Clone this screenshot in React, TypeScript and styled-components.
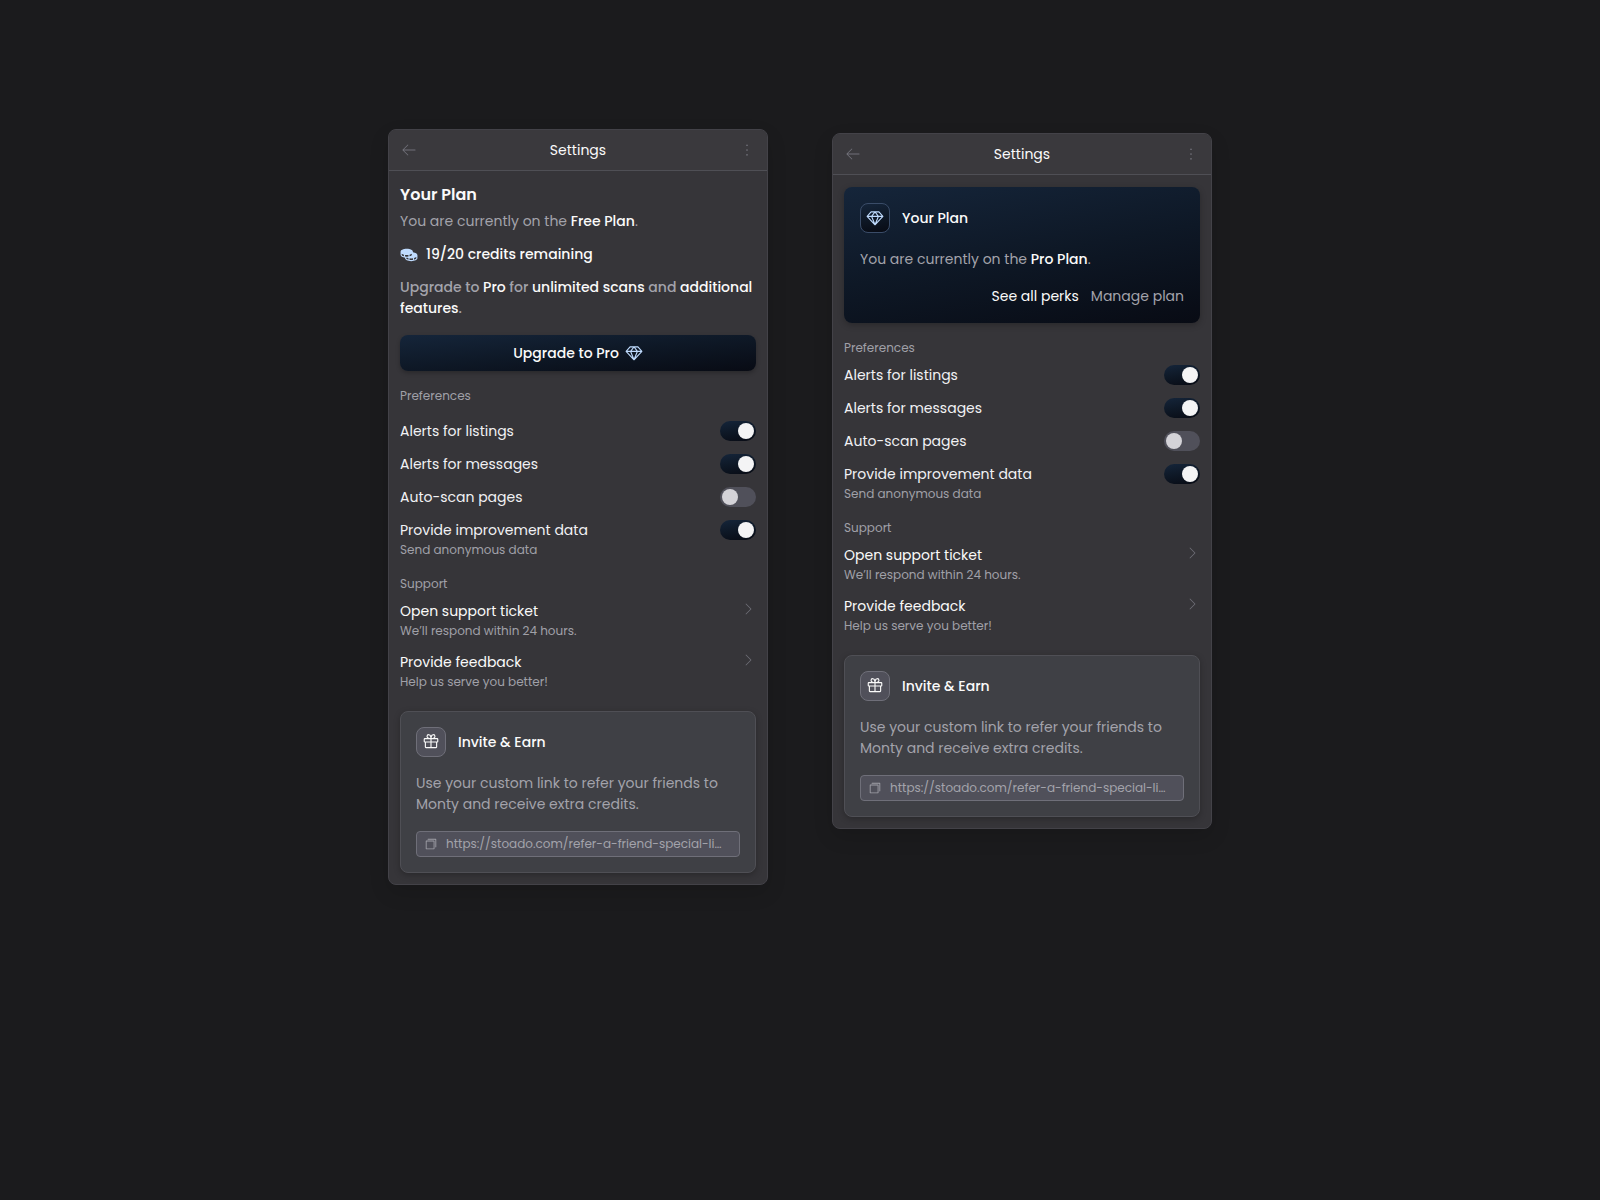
import React, { useId, useState } from "react";
import styled, { createGlobalStyle, css } from "styled-components";
import {
  PiArrowLeftLight,
  PiCaretRightLight,
  PiCoinsFill,
  PiCopySimple,
  PiDotsThreeVertical,
  PiGift,
  PiSketchLogo,
} from "react-icons/pi";

const c = {
  page: "#1b1b1d",
  panel: "#363539",
  header: "#3a393d",
  line: "#4f4f55",
  edge: "#434248",
  card: "#3f4045",
  chip: "#50505a",
  chipEdge: "#6f6f79",
  white: "#fafafa",
  text: "#f1f1f4",
  muted: "#a3a3ab",
  dim: "#a0a0a8",
  faint: "#71717a",
  ice: "#bfdbfe",
};

const navy = (angle: number) =>
  `linear-gradient(${angle}deg, #15253a 0%, #0e1826 50%, #080b14 100%)`;

const GlobalStyle = createGlobalStyle`
  *, *::before, *::after { box-sizing: border-box; }
  body {
    margin: 0;
    background: ${c.page};
    color: ${c.text};
    font-family: Poppins, Inter, "Open Sans", sans-serif;
    font-size: 14px;
    line-height: 21px;
    -webkit-font-smoothing: antialiased;
  }
  h1, h2, h3, p, ul { margin: 0; padding: 0; font: inherit; }
  ul { list-style: none; }
  button, input { font: inherit; color: inherit; }
  button { border: 0; padding: 0; background: none; cursor: pointer; }
  a { color: inherit; text-decoration: none; }
`;

const Page = styled.main`
  display: flex;
  flex-wrap: wrap;
  justify-content: center;
  align-items: flex-start;
  gap: 64px;
  min-height: 100vh;
  padding: 129px 24px;
`;

const Panel = styled.section<{ $lowered?: boolean }>`
  flex: 0 1 380px;
  min-width: 0;
  margin-top: ${(p) => (p.$lowered ? "4px" : "0")};
  border: 1px solid ${c.edge};
  border-radius: 8px;
  background: ${c.panel};
  box-shadow: 0 8px 20px rgba(0, 0, 0, 0.12);
  overflow: hidden;
`;

const Header = styled.header`
  display: flex;
  align-items: center;
  justify-content: space-between;
  height: 41px;
  padding: 0 11px;
  border-bottom: 1px solid ${c.line};
  background: ${c.header};
`;

const HeaderTitle = styled.h1`
  color: ${c.white};
`;

const IconButton = styled.button`
  display: flex;
  color: ${c.faint};
  font-size: 18px;
`;

const Body = styled.div`
  display: flex;
  flex-direction: column;
  gap: 16px;
  padding: 12px 11px 11px;
`;

const Plan = styled.section`
  display: flex;
  flex-direction: column;
  gap: 12px;
`;

const PlanHeading = styled.div`
  display: flex;
  flex-direction: column;
  gap: 4px;
`;

const PlanTitle = styled.h2`
  color: ${c.white};
  font-size: 16px;
  font-weight: 600;
  line-height: 24px;
`;

const Copy = styled.p<{ $strong?: boolean }>`
  color: ${c.muted};
  font-weight: ${(p) => (p.$strong ? 500 : 400)};

  strong {
    color: ${c.white};
    font-weight: 500;
  }
`;

const Credits = styled.p`
  display: flex;
  align-items: center;
  gap: 8px;
  color: ${c.white};
  font-weight: 500;

  svg {
    color: ${c.ice};
    font-size: 18px;
  }
`;

const UpgradeButton = styled.button`
  display: flex;
  align-items: center;
  justify-content: center;
  gap: 6px;
  height: 36px;
  border-radius: 8px;
  background: ${navy(175)};
  box-shadow: 0 2px 4px rgba(0, 0, 0, 0.25);
  color: ${c.white};
  font-weight: 500;

  svg {
    color: ${c.ice};
    font-size: 18px;
  }
`;

const Group = styled.section<{ $loose?: boolean }>`
  display: flex;
  flex-direction: column;
  gap: ${(p) => (p.$loose ? "16px" : "8px")};
`;

const GroupTitle = styled.h3`
  color: ${c.dim};
  font-size: 12px;
  line-height: 18px;
`;

const List = styled.ul`
  display: flex;
  flex-direction: column;
  gap: 12px;
`;

const rowLayout = css`
  display: flex;
  align-items: flex-start;
  justify-content: space-between;
  gap: 12px;
`;

const ToggleRow = styled.li`
  ${rowLayout}
`;

const LinkRow = styled.a`
  ${rowLayout}

  svg {
    flex: none;
    color: ${c.faint};
    font-size: 16px;
  }
`;

const RowLabel = styled.label`
  display: block;
  color: ${c.text};
`;

const LinkLabel = styled.span`
  display: block;
  color: ${c.white};
`;

const Hint = styled.span`
  display: block;
  color: ${c.dim};
  font-size: 12px;
  line-height: 18px;
`;

const Switch = styled.input`
  appearance: none;
  flex: none;
  display: flex;
  align-items: center;
  width: 36px;
  height: 20px;
  margin: 0;
  padding: 2px;
  border-radius: 10px;
  background: ${c.chip};
  cursor: pointer;

  &::before {
    content: "";
    width: 16px;
    height: 16px;
    border-radius: 50%;
    background: #d4d3d8;
  }

  &:checked {
    justify-content: flex-end;
    background: ${navy(170)};
  }

  &:checked::before {
    background: #f4f4f5;
  }
`;

const Card = styled.section<{ $tone: "pro" | "plain" }>`
  display: flex;
  flex-direction: column;
  gap: 16px;
  border-radius: 8px;
  box-shadow: 0 2px 6px rgba(0, 0, 0, 0.25);
  ${(p) =>
    p.$tone === "pro"
      ? css`
          padding: 16px;
          background: ${navy(170)};
        `
      : css`
          margin-top: 4px;
          padding: 15px;
          border: 1px solid ${c.line};
          background: ${c.card};
        `}
`;

const CardHead = styled.div`
  display: flex;
  align-items: center;
  gap: 12px;
`;

const Badge = styled.span<{ $tone: "pro" | "plain" }>`
  display: flex;
  align-items: center;
  justify-content: center;
  width: 30px;
  height: 30px;
  border: 1px solid ${(p) => (p.$tone === "pro" ? "#3a4c68" : c.chipEdge)};
  border-radius: 8px;
  background: ${(p) => (p.$tone === "pro" ? navy(170) : c.chip)};
  color: ${(p) => (p.$tone === "pro" ? c.ice : c.white)};
  font-size: 18px;
`;

const CardTitle = styled.h2`
  color: ${c.white};
  font-weight: 500;
`;

const Actions = styled.div`
  display: flex;
  justify-content: flex-end;
  gap: 12px;
`;

const TextButton = styled.button<{ $primary?: boolean }>`
  color: ${(p) => (p.$primary ? c.white : c.muted)};
`;

const LinkField = styled.div`
  display: flex;
  align-items: center;
  gap: 8px;
  height: 26px;
  padding: 0 12px 0 7px;
  border: 1px solid ${c.chipEdge};
  border-radius: 4px;
  background: ${c.chip};
`;

const CopyButton = styled.button`
  display: flex;
  flex: none;
  color: ${c.dim};
  font-size: 14px;
`;

const LinkInput = styled.input`
  flex: 1;
  min-width: 0;
  padding: 0;
  border: 0;
  outline: 0;
  background: none;
  color: ${c.muted};
  font-size: 12px;
  line-height: 18px;
  text-overflow: ellipsis;
`;

function PanelHeader() {
  return (
    <Header>
      <IconButton type="button" aria-label="Back">
        <PiArrowLeftLight />
      </IconButton>
      <HeaderTitle>Settings</HeaderTitle>
      <IconButton type="button" aria-label="More options">
        <PiDotsThreeVertical />
      </IconButton>
    </Header>
  );
}

type Preference = { label: string; hint?: string; on: boolean };

const preferences: Preference[] = [
  { label: "Alerts for listings", on: true },
  { label: "Alerts for messages", on: true },
  { label: "Auto-scan pages", on: false },
  { label: "Provide improvement data", hint: "Send anonymous data", on: true },
];

function PreferenceRow({ label, hint, on }: Preference) {
  const id = useId();
  const [checked, setChecked] = useState(on);
  return (
    <ToggleRow>
      <div>
        <RowLabel htmlFor={id}>{label}</RowLabel>
        {hint && <Hint>{hint}</Hint>}
      </div>
      <Switch
        id={id}
        type="checkbox"
        checked={checked}
        onChange={(e) => setChecked(e.target.checked)}
      />
    </ToggleRow>
  );
}

function Preferences({ loose }: { loose?: boolean }) {
  return (
    <Group $loose={loose}>
      <GroupTitle>Preferences</GroupTitle>
      <List>
        {preferences.map((p) => (
          <PreferenceRow key={p.label} {...p} />
        ))}
      </List>
    </Group>
  );
}

const supportLinks = [
  { label: "Open support ticket", hint: "We’ll respond within 24 hours.", href: "#ticket" },
  { label: "Provide feedback", hint: "Help us serve you better!", href: "#feedback" },
];

function Support() {
  return (
    <Group>
      <GroupTitle>Support</GroupTitle>
      <List>
        {supportLinks.map((s) => (
          <li key={s.label}>
            <LinkRow href={s.href}>
              <span>
                <LinkLabel>{s.label}</LinkLabel>
                <Hint>{s.hint}</Hint>
              </span>
              <PiCaretRightLight />
            </LinkRow>
          </li>
        ))}
      </List>
    </Group>
  );
}

function InviteCard() {
  return (
    <Card $tone="plain">
      <CardHead>
        <Badge $tone="plain">
          <PiGift />
        </Badge>
        <CardTitle>Invite &amp; Earn</CardTitle>
      </CardHead>
      <Copy>Use your custom link to refer your friends to Monty and receive extra credits.</Copy>
      <LinkField>
        <CopyButton type="button" aria-label="Copy link">
          <PiCopySimple />
        </CopyButton>
        <LinkInput
          aria-label="Referral link"
          readOnly
          value="https://stoado.com/refer-a-friend-special-li…"
        />
      </LinkField>
    </Card>
  );
}

export default function App() {
  return (
    <>
      <GlobalStyle />
      <Page>
        <Panel>
          <PanelHeader />
          <Body>
            <Plan>
              <PlanHeading>
                <PlanTitle>Your Plan</PlanTitle>
                <Copy>
                  You are currently on the <strong>Free Plan</strong>.
                </Copy>
              </PlanHeading>
              <Credits>
                <PiCoinsFill />
                19/20 credits remaining
              </Credits>
              <Copy $strong>
                Upgrade to <strong>Pro</strong> for <strong>unlimited scans</strong> and{" "}
                <strong>additional features</strong>.
              </Copy>
            </Plan>
            <UpgradeButton type="button">
              Upgrade to Pro
              <PiSketchLogo />
            </UpgradeButton>
            <Preferences loose />
            <Support />
            <InviteCard />
          </Body>
        </Panel>

        <Panel $lowered>
          <PanelHeader />
          <Body>
            <Card $tone="pro">
              <CardHead>
                <Badge $tone="pro">
                  <PiSketchLogo />
                </Badge>
                <CardTitle>Your Plan</CardTitle>
              </CardHead>
              <Copy>
                You are currently on the <strong>Pro Plan</strong>.
              </Copy>
              <Actions>
                <TextButton type="button" $primary>
                  See all perks
                </TextButton>
                <TextButton type="button">Manage plan</TextButton>
              </Actions>
            </Card>
            <Preferences />
            <Support />
            <InviteCard />
          </Body>
        </Panel>
      </Page>
    </>
  );
}
